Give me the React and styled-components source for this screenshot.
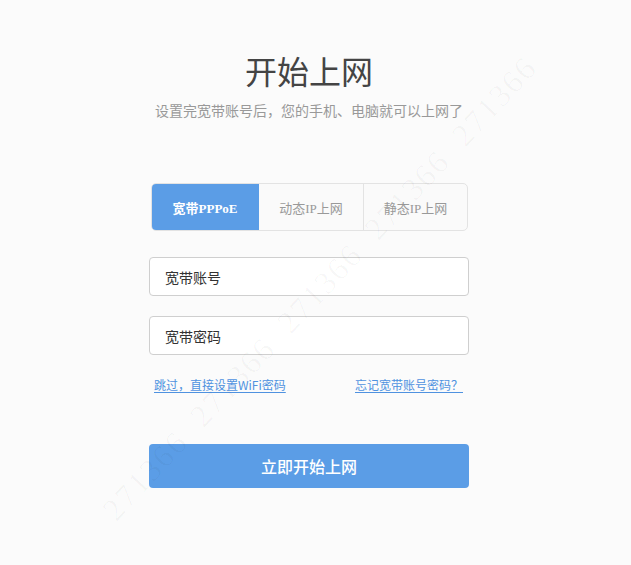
import { useState } from 'react';
import styled, { createGlobalStyle } from 'styled-components';

const GlobalStyle = createGlobalStyle`
    html, body {
        margin: 0;
        padding: 0;
        background: #fbfbfb;
    }
    body {
        font-family: 'Noto Sans CJK SC', 'Noto Sans', sans-serif;
    }
`;

const tabs = ['宽带PPPoE', '动态IP上网', '静态IP上网'];

export default function App() {
    const [active, setActive] = useState(0);

    return (
        <>
            <GlobalStyle />
            <Page>
                <Watermark>271366&nbsp;&nbsp;271366&nbsp;&nbsp;271366&nbsp;&nbsp;271366&nbsp;&nbsp;271366</Watermark>
                <Column>
                    <Title>开始上网</Title>
                    <Subtitle>设置完宽带账号后，您的手机、电脑就可以上网了</Subtitle>

                    <Tabs>
                        {tabs.map((t, i) => (
                            <Tab key={t} active={i === active} onClick={() => setActive(i)}>
                                {t}
                            </Tab>
                        ))}
                    </Tabs>

                    <Field>
                        <Input placeholder="宽带账号" />
                    </Field>
                    <Field gap={20}>
                        <Input type="password" placeholder="宽带密码" />
                    </Field>

                    <Links>
                        <LinkText href="#">跳过，直接设置WiFi密码</LinkText>
                        <LinkText href="#">忘记宽带账号密码？</LinkText>
                    </Links>

                    <Submit>立即开始上网</Submit>
                </Column>
            </Page>
        </>
    );
}

const Page = styled.div`
    position: relative;
    width: 618px;
    height: 565px;
    overflow: hidden;
    display: flex;
    justify-content: center;
`;

const Watermark = styled.div`
    position: absolute;
    left: -10px;
    top: 270px;
    width: 660px;
    text-align: center;
    transform: rotate(-47deg);
    transform-origin: center;
    font-family: 'Liberation Serif', serif;
    font-size: 32px;
    letter-spacing: 2px;
    white-space: nowrap;
    color: rgba(0, 0, 0, 0.03);
    pointer-events: none;
    z-index: 2;
`;

const Column = styled.div`
    width: 320px;
    padding-top: 50px;
    display: flex;
    flex-direction: column;
    align-items: stretch;
`;

const Title = styled.h1`
    margin: 0;
    font-size: 32px;
    line-height: 40px;
    font-weight: 400;
    color: #444;
    text-align: center;
`;

const Subtitle = styled.p`
    margin: 10px -40px 0;
    font-size: 14px;
    line-height: 20px;
    color: #999;
    text-align: center;
`;

const Tabs = styled.div`
    margin: 63px 1px 0 2px;
    height: 48px;
    display: grid;
    grid-template-columns: 107px 104px 1fr;
    box-sizing: border-box;
    border: 1px solid #e3e3e3;
    border-radius: 5px;
    overflow: hidden;
    background: #fafafa;
`;

const Tab = styled.div`
    display: flex;
    align-items: center;
    justify-content: center;
    font-family: 'Liberation Serif', 'Noto Sans CJK SC', serif;
    font-size: 13px;
    font-weight: ${p => (p.active ? 700 : 400)};
    color: ${p => (p.active ? '#fff' : '#999')};
    background: ${p => (p.active ? '#5b9de6' : 'transparent')};
    margin: ${p => (p.active ? '-1px 0 -1px -1px' : '0')};
    border-left: ${p => (p.active ? 'none' : '1px solid #e3e3e3')};
    cursor: pointer;

    &:nth-child(2) {
        border-left: none;
    }
`;

const Field = styled.div`
    margin-top: ${p => p.gap ?? 26}px;
`;

const Input = styled.input`
    width: 100%;
    height: 39px;
    box-sizing: border-box;
    border: 1px solid #cfcfcf;
    border-radius: 4px;
    background: #fff;
    padding: 0 15px;
    font-family: 'Noto Sans CJK SC', sans-serif;
    font-size: 14px;
    color: #333;
    outline: none;

    &::placeholder {
        color: #333;
    }
`;

const Links = styled.div`
    margin: 21px 6px 0 5px;
    display: flex;
    justify-content: space-between;
    line-height: 18px;
`;

const LinkText = styled.a`
    font-size: 12px;
    color: #4f92e0;
    text-decoration: underline;
    text-underline-offset: 2px;
`;

const Submit = styled.button`
    margin-top: 50px;
    height: 44px;
    border: none;
    border-radius: 4px;
    background: #5b9de6;
    color: #fff;
    font-family: 'Noto Sans CJK SC', sans-serif;
    font-size: 16px;
    font-weight: 500;
    cursor: pointer;
`;
